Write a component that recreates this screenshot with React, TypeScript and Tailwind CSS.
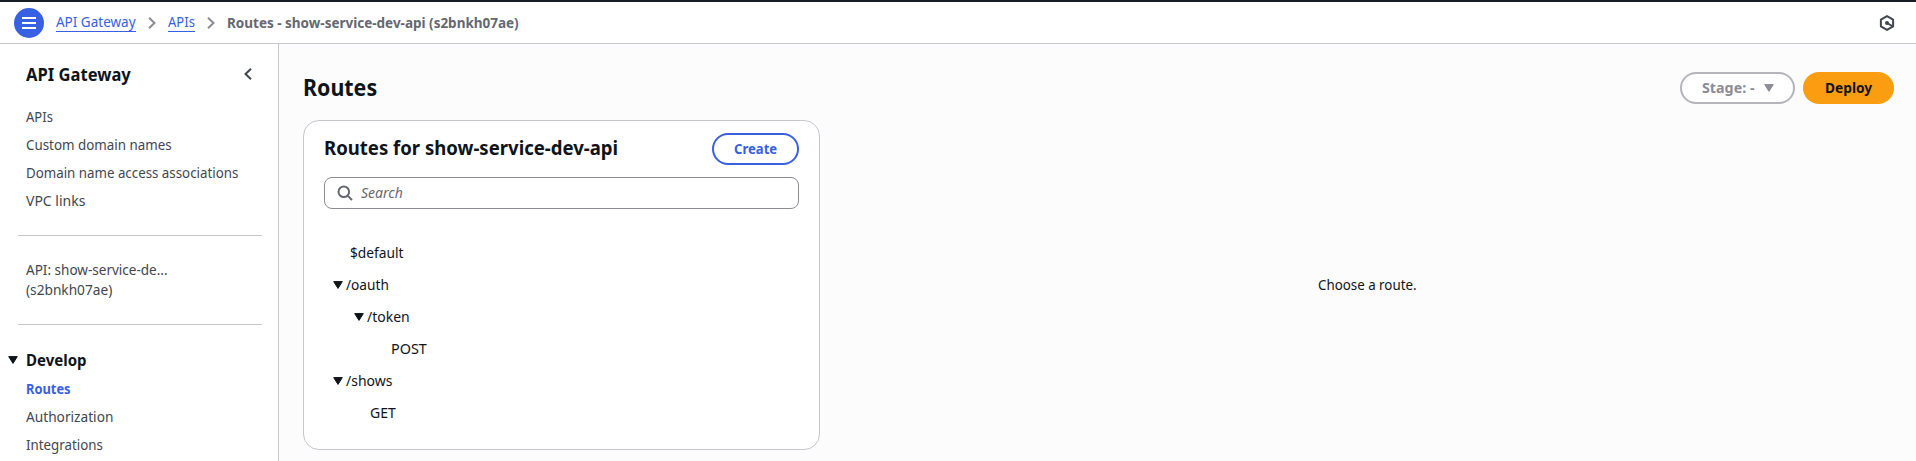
import { useLayoutEffect, useRef, useState } from "react";

function T({ w, children, className = "" }: { w: number; children: string; className?: string }) {
  const ref = useRef<HTMLSpanElement>(null);
  const [scale, setScale] = useState(1);
  useLayoutEffect(() => {
    if (ref.current) setScale(w / ref.current.offsetWidth);
  }, [w]);
  return (
    <span className={`flex shrink-0 whitespace-nowrap ${className}`} style={{ width: w }}>
      <span ref={ref} className="inline-block shrink-0 origin-left" style={{ transform: `scaleX(${scale})` }}>
        {children}
      </span>
    </span>
  );
}

function Caret({ className = "" }: { className?: string }) {
  return (
    <svg viewBox="0 0 10 8" className={`h-2 w-2.5 shrink-0 ${className}`} fill="currentColor" stroke="currentColor" strokeWidth="1" strokeLinejoin="round">
      <path d="M.7.6h8.6L5 7.4z" />
    </svg>
  );
}

function Separator() {
  return (
    <svg viewBox="0 0 8 12" className="mt-px h-3 w-2 shrink-0 text-[#8c8c94]" fill="none" stroke="currentColor" strokeWidth="2">
      <path d="M1 .8 6.5 6 1 11.2" />
    </svg>
  );
}

function SideLink({ label, w, active }: { label: string; w: number; active?: boolean }) {
  return (
    <a className={`flex h-7 items-center pl-[26px] ${active ? "font-bold text-[#3860e2]" : "text-[#424650]"}`}>
      <T w={w}>{label}</T>
    </a>
  );
}

function Row({ children, className }: { children: React.ReactNode; className: string }) {
  return <li className={`flex h-8 items-center gap-[3px] ${className}`}>{children}</li>;
}

export default function App() {
  return (
    <div className="flex h-[461px] w-full flex-col overflow-hidden bg-[#fcfcfd] font-['Noto_Sans','Open_Sans',sans-serif] text-[14px] leading-5 text-[#0f141a]">
      <header className="flex h-11 shrink-0 items-center border-t-2 border-b border-t-[#161d26] border-b-[#c6c6cd] bg-white pr-[21px] pl-[14px]">
        <button className="flex h-[30px] w-[30px] items-center justify-center rounded-full bg-[#3860e2]">
          <svg viewBox="0 0 14 12" className="h-3 w-3.5" stroke="white" strokeWidth="2">
            <path d="M0 1h14M0 6h14M0 11h14" />
          </svg>
        </button>
        <nav className="ml-3 flex items-center">
          <a className="border-b border-[#3860e2] text-[#3860e2] leading-[18px]"><T w={80}>API Gateway</T></a>
          <span className="mx-3"><Separator /></span>
          <a className="border-b border-[#3860e2] text-[#3860e2] leading-[18px]"><T w={27}>APIs</T></a>
          <span className="mx-3"><Separator /></span>
          <T w={292} className="font-bold text-[#656871]">Routes - show-service-dev-api (s2bnkh07ae)</T>
        </nav>
        <svg viewBox="0 0 16 16" className="ml-auto h-4 w-4 text-[#424650]" fill="none" stroke="currentColor" strokeWidth="2" strokeLinejoin="round">
          <path d="M8 1.1 14.1 4.6v6.8L8 14.9 1.9 11.4V4.6z" />
          <path d="M8 8l5.2 3" />
          <circle cx="8" cy="8" r="2" fill="currentColor" stroke="none" />
        </svg>
      </header>

      <div className="flex min-h-0 flex-1">
        <aside className="w-[279px] shrink-0 overflow-hidden border-r border-[#c6c6cd] bg-white">
          <div className="flex h-[59px] items-center justify-between pt-px pr-[26px] pl-[26px] text-[18px] font-bold">
            <T w={105}>API Gateway</T>
            <svg viewBox="0 0 8 12" className="h-3 w-2 text-[#424650]" fill="none" stroke="currentColor" strokeWidth="2">
              <path d="M7 .8 1.5 6 7 11.2" />
            </svg>
          </div>
          <nav>
            <SideLink label="APIs" w={27} />
            <SideLink label="Custom domain names" w={146} />
            <SideLink label="Domain name access associations" w={212} />
            <SideLink label="VPC links" w={59} />
          </nav>
          <hr className="mt-5 mr-4 ml-[18px] border-[#c6c6cd]" />
          <p className="mt-6 pl-[26px] text-[#424650]">
            <T w={142}>API: show-service-de...</T>
            <T w={86}>(s2bnkh07ae)</T>
          </p>
          <hr className="mt-6 mr-4 ml-[18px] border-[#c6c6cd]" />
          <div className="mt-[22px] mb-0.5 flex h-[26px] items-center gap-2 pl-2 text-[16px] font-bold">
            <Caret />
            <T w={61}>Develop</T>
          </div>
          <SideLink label="Routes" w={45} active />
          <SideLink label="Authorization" w={87} />
          <SideLink label="Integrations" w={77} />
        </aside>

        <main className="flex min-w-0 flex-1 flex-col pt-7 pr-[22px] pl-6">
          <div className="flex h-8 shrink-0 items-center">
            <h1 className="pb-0.5 text-[24px] font-bold"><T w={74}>Routes</T></h1>
            <button className="ml-auto flex h-8 w-[115px] items-center rounded-full border-2 border-[#b4b4bb] bg-white pl-5 font-bold text-[#8c8c94]">
              <T w={52}>Stage: -</T>
              <Caret className="ml-2.5" />
            </button>
            <button className="ml-2 flex h-8 w-[91px] items-center justify-center rounded-full bg-[#fa9d11] font-bold">
              <T w={47}>Deploy</T>
            </button>
          </div>

          <div className="mt-4 flex">
            <section className="h-[330px] w-[517px] shrink-0 rounded-2xl border border-[#c6c6cd] bg-white px-5 pt-3">
              <div className="flex h-8 items-center justify-between">
                <h2 className="pb-0.5 text-[20px] font-bold"><T w={294}>Routes for show-service-dev-api</T></h2>
                <button className="flex h-8 w-[87px] items-center justify-center rounded-full border-2 border-[#3860e2] font-bold text-[#3860e2]">
                  <T w={43}>Create</T>
                </button>
              </div>
              <div className="mt-3 flex h-8 items-center rounded-lg border border-[#8c8c94] pl-3 text-[#656871]">
                <svg viewBox="0 0 16 16" className="h-4 w-4" fill="none" stroke="currentColor" strokeWidth="2">
                  <circle cx="6.8" cy="6.8" r="5.3" />
                  <path d="m10.6 10.6 4.4 4.4" />
                </svg>
                <T w={42} className="ml-2 italic">Search</T>
              </div>
              <ul className="mt-7">
                <Row className="pl-[26px]"><T w={54}>$default</T></Row>
                <Row className="pl-[9px]"><Caret /><T w={43}>/oauth</T></Row>
                <Row className="pl-[30px]"><Caret /><T w={43}>/token</T></Row>
                <Row className="pl-[67px]"><T w={36}>POST</T></Row>
                <Row className="pl-[9px]"><Caret /><T w={46}>/shows</T></Row>
                <Row className="pl-[46px]"><T w={26}>GET</T></Row>
              </ul>
            </section>
            <div className="flex flex-1 items-center justify-center pl-5">
              <T w={99}>Choose a route.</T>
            </div>
          </div>
        </main>
      </div>
    </div>
  );
}
